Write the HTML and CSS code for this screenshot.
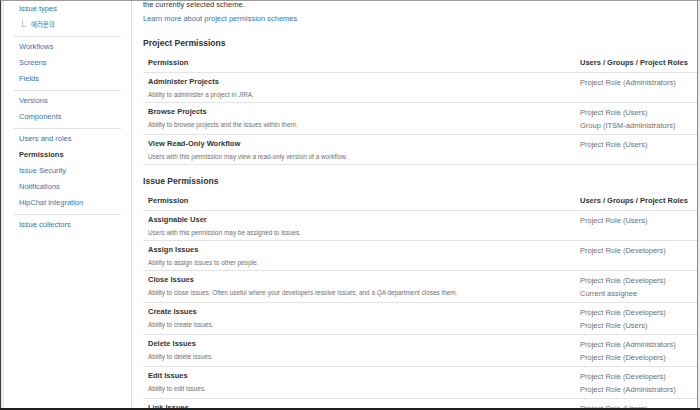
FILE: index.html
```html
<!DOCTYPE html>
<html lang="en">
<head>
<meta charset="utf-8">
<title>Permissions</title>
<link rel="stylesheet" href="styles.css">
</head>
<body>
<div class="screen">
  <div class="window">
    <aside class="sidebar">
      <ul class="nav-group first">
        <li><a class="nav-link">Issue types</a></li>
        <li class="sub"><span class="branch"></span><a class="nav-link">에러문의</a></li>
      </ul>
      <ul class="nav-group">
        <li><a class="nav-link">Workflows</a></li>
        <li><a class="nav-link">Screens</a></li>
        <li><a class="nav-link">Fields</a></li>
      </ul>
      <ul class="nav-group">
        <li><a class="nav-link">Versions</a></li>
        <li><a class="nav-link">Components</a></li>
      </ul>
      <ul class="nav-group">
        <li><a class="nav-link">Users and roles</a></li>
        <li><span class="nav-link active">Permissions</span></li>
        <li><a class="nav-link">Issue Security</a></li>
        <li><a class="nav-link">Notifications</a></li>
        <li><a class="nav-link">HipChat integration</a></li>
      </ul>
      <ul class="nav-group last">
        <li><a class="nav-link">Issue collectors</a></li>
      </ul>
    </aside>
    <main class="main">
      <p class="intro">the currently selected scheme.</p>
      <p class="learn"><a class="link">Learn more about project permission schemes</a></p>

      <h3 class="section-title first">Project Permissions</h3>
      <div class="perm-table">
        <div class="perm-row head">
          <div class="cell">Permission</div>
          <div class="cell">Users / Groups / Project Roles</div>
        </div>
        <div class="perm-row">
          <div class="cell"><div class="title">Administer Projects</div><div class="desc">Ability to administer a project in JIRA.</div></div>
          <div class="cell grants"><div>Project Role (Administrators)</div></div>
        </div>
        <div class="perm-row">
          <div class="cell"><div class="title">Browse Projects</div><div class="desc">Ability to browse projects and the issues within them.</div></div>
          <div class="cell grants"><div>Project Role (Users)</div><div>Group (ITSM-administrators)</div></div>
        </div>
        <div class="perm-row">
          <div class="cell"><div class="title">View Read-Only Workflow</div><div class="desc">Users with this permission may view a read-only version of a workflow.</div></div>
          <div class="cell grants"><div>Project Role (Users)</div></div>
        </div>
      </div>

      <h3 class="section-title">Issue Permissions</h3>
      <div class="perm-table">
        <div class="perm-row head">
          <div class="cell">Permission</div>
          <div class="cell">Users / Groups / Project Roles</div>
        </div>
        <div class="perm-row">
          <div class="cell"><div class="title">Assignable User</div><div class="desc">Users with this permission may be assigned to issues.</div></div>
          <div class="cell grants"><div>Project Role (Users)</div></div>
        </div>
        <div class="perm-row">
          <div class="cell"><div class="title">Assign Issues</div><div class="desc">Ability to assign issues to other people.</div></div>
          <div class="cell grants"><div>Project Role (Developers)</div></div>
        </div>
        <div class="perm-row">
          <div class="cell"><div class="title">Close Issues</div><div class="desc">Ability to close issues. Often useful where your developers resolve issues, and a QA department closes them.</div></div>
          <div class="cell grants"><div>Project Role (Developers)</div><div>Current assignee</div></div>
        </div>
        <div class="perm-row">
          <div class="cell"><div class="title">Create Issues</div><div class="desc">Ability to create issues.</div></div>
          <div class="cell grants"><div>Project Role (Developers)</div><div>Project Role (Users)</div></div>
        </div>
        <div class="perm-row">
          <div class="cell"><div class="title">Delete Issues</div><div class="desc">Ability to delete issues.</div></div>
          <div class="cell grants"><div>Project Role (Administrators)</div><div>Project Role (Developers)</div></div>
        </div>
        <div class="perm-row">
          <div class="cell"><div class="title">Edit Issues</div><div class="desc">Ability to edit issues.</div></div>
          <div class="cell grants"><div>Project Role (Developers)</div><div>Project Role (Administrators)</div></div>
        </div>
        <div class="perm-row">
          <div class="cell"><div class="title">Link Issues</div><div class="desc">Ability to link issues together and create linked issues.</div></div>
          <div class="cell grants"><div>Project Role (Users)</div></div>
        </div>
      </div>
    </main>
  </div>
  <div class="bottom-bar"></div>
</div>
</body>
</html>
```

FILE: styles.css
```css
html, body {
  margin: 0;
  padding: 0;
  background: #ffffff;
}

body {
  font-family: "Liberation Sans", Arial, "Noto Sans CJK KR", sans-serif;
  color: #333333;
  font-size: 7.5px;
}

.screen {
  width: 700px;
  height: 410px;
  display: flex;
  flex-direction: column;
  overflow: hidden;
}

.window {
  flex: 1;
  min-height: 0;
  display: flex;
  border-top: 1px solid #9c9c9c;
  border-left: 1px solid #3a3a3a;
  padding: 0 2px 0 3px;
  background: #ececec;
  overflow: hidden;
}

.bottom-bar {
  height: 2px;
  background: #1e1e1e;
}

/* Sidebar */
.sidebar {
  width: 127px;
  flex: none;
  background: #ffffff;
  border-right: 1px solid #dcdcdc;
}

.nav-group {
  list-style: none;
  margin: 0 10px;
  padding: 2px 0 3px;
  border-bottom: 1px solid #e1e1e1;
}

.nav-group.first {
  padding-top: 0;
}

.nav-group.last {
  border-bottom: none;
}

.nav-group li {
  line-height: 16px;
  height: 16px;
  padding-left: 5px;
  white-space: nowrap;
}

.nav-link {
  color: #3b73af;
  font-size: 7.5px;
  text-decoration: none;
}

.nav-link.active {
  color: #333333;
  font-weight: bold;
}

.nav-group li.sub {
  display: flex;
  align-items: center;
  padding-left: 8px;
}

.nav-group li.sub .nav-link {
  font-size: 6.4px;
}

.branch {
  width: 3px;
  height: 6px;
  border-left: 1px solid #c8c8c8;
  border-bottom: 1px solid #c8c8c8;
  margin: -3px 5px 0 0;
}

/* Main */
.main {
  flex: 1;
  min-width: 0;
  background: #ffffff;
  border-right: 1px solid #8a8a8a;
  padding-left: 11px;
  overflow: hidden;
}

.intro {
  margin: 0;
  line-height: 8px;
  color: #333333;
}

.learn {
  margin: 4px 0 0;
  line-height: 12px;
}

.link {
  color: #3b73af;
  text-decoration: none;
}

.section-title {
  margin: 10px 0 4px;
  font-size: 8.6px;
  line-height: 12px;
  font-weight: bold;
  color: #333333;
}

.section-title.first {
  margin-top: 12px;
}

.perm-table {
  width: 554px;
}

.perm-row {
  display: grid;
  grid-template-columns: 1fr 122px;
  border-bottom: 1px solid #e3e3e3;
}

.perm-row .cell {
  padding: 3px 5px 1px;
  white-space: nowrap;
}

.perm-row.head .cell {
  padding: 3px 5px;
  line-height: 13px;
  font-weight: bold;
  color: #333333;
}

.title {
  font-weight: bold;
  line-height: 12px;
  color: #333333;
}

.desc {
  font-size: 6.4px;
  line-height: 13px;
  color: #707070;
}

.perm-row .cell.grants {
  padding: 3px 5px 2px;
  line-height: 13px;
  color: #6f6f6f;
}
```
